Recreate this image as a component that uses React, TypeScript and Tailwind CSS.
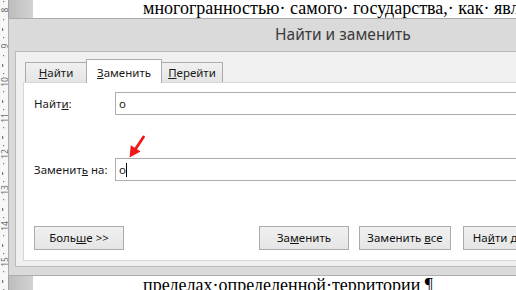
import React from "react";

function Ruler() {
  const nums = [8, 9, 10, 11, 12, 13, 14, 15];
  const base = 10;
  const step = 36;
  const marks: React.ReactNode[] = [];
  for (let i = -1; i < nums.length; i++) {
    const y = base + i * step;
    marks.push(<rect key={`a${i}`} x={3} y={y + 9} width={1.2} height={1.2} fill="#7a7a7a" />);
    marks.push(<rect key={`b${i}`} x={2} y={y + 18} width={1.2} height={3} fill="#7a7a7a" />);
    marks.push(<rect key={`c${i}`} x={3} y={y + 27} width={1.2} height={1.2} fill="#7a7a7a" />);
  }
  return (
    <svg width="8" height="290" viewBox="0 0 8 290" className="shrink-0 block bg-[#f7f7f7]">
      {nums.map((n, i) => {
        const y = base + i * step;
        return (
          <text
            key={n}
            x={4}
            y={y}
            fontSize="8.5"
            fill="#6b6b6b"
            fontFamily="'Noto Sans', sans-serif"
            textAnchor="middle"
            dominantBaseline="central"
            transform={`rotate(-90 4 ${y})`}
          >
            {n}
          </text>
        );
      })}
      {marks}
    </svg>
  );
}

function Arrow() {
  return (
    <svg className="absolute inset-0 pointer-events-none" width="516" height="290" viewBox="0 0 516 290">
      <line x1="143.5" y1="137" x2="135.5" y2="149" stroke="#f01818" strokeWidth="2.8" strokeLinecap="round" />
      <polygon points="129.5,157.5 130.8,145.2 140.6,151.6" fill="#f01818" />
    </svg>
  );
}

function Btn({ children, className }: { children: React.ReactNode; className?: string }) {
  return (
    <div
      className={`h-[24px] flex items-center justify-center border border-[#acacac] bg-linear-to-b from-[#f0f0f0] to-[#e5e5e5] text-[#111] ${className ?? ""}`}
    >
      {children}
    </div>
  );
}

function Dialog() {
  return (
    <div
      className="absolute left-[8px] top-[18px] w-[600px] h-[258px] bg-[#dadada] border border-[#adadad] flex flex-col text-[11.5px] text-[#1a1a1a]"
      style={{ fontFamily: '"Noto Sans", sans-serif' }}
    >
      <div className="h-[32px] shrink-0 flex items-center pl-[266px] text-[15.5px] text-[#3a3a3a]">
        Найти и заменить
      </div>
      <div className="flex-1 px-[6px] pb-[8px] flex flex-col">
        <div className="flex-1 bg-[#f0f0f0] border border-[#bababa] pl-[7px] pt-[7px] pb-[5px] flex flex-col">
          <div className="h-[23px] shrink-0 flex items-end pl-[2px]">
            <div className="w-[62px] h-[20px] border border-b-0 border-[#acacac] bg-linear-to-b from-[#f0f0f0] to-[#e5e5e5] flex items-center justify-center">
              <span><u>Н</u>айти</span>
            </div>
            <div className="relative z-10 -ml-px -mb-px w-[76px] h-[24px] border border-b-0 border-[#acacac] bg-white flex items-center justify-center pt-[2px]">
              <span><u>З</u>аменить</span>
            </div>
            <div className="-ml-px w-[62px] h-[20px] border border-b-0 border-[#acacac] bg-linear-to-b from-[#f0f0f0] to-[#e5e5e5] flex items-center justify-center">
              <span><u>П</u>ерейти</span>
            </div>
          </div>
          <div className="flex-1 bg-white border-t border-l border-b border-[#d6d6d6] pt-[9px] pb-[10px] flex flex-col">
            <div className="h-[23px] flex items-center">
              <div className="w-[91px] pl-[10px]">
                Найт<u>и</u>:
              </div>
              <div className="flex-1 h-[23px] border border-[#abadb3] pl-[3px] flex items-center">o</div>
            </div>
            <div className="h-[23px] mt-[43px] flex items-center">
              <div className="w-[91px] pl-[10px]">
                Заменит<u>ь</u> на:
              </div>
              <div className="flex-1 h-[23px] border border-[#abadb3] pl-[3px] flex items-center">
                <span>o</span>
                <span className="w-px h-[14px] bg-black" />
              </div>
            </div>
            <div className="h-[24px] mt-[45px] flex">
              <Btn className="ml-[10px] w-[90px]">
                <span>Боль<u>ш</u>е &gt;&gt;</span>
              </Btn>
              <Btn className="ml-[135px] w-[90px]">
                <span>За<u>м</u>енить</span>
              </Btn>
              <Btn className="ml-[10px] w-[92px]">
                <span>Заменить <u>в</u>се</span>
              </Btn>
              <Btn className="ml-[12px] w-[90px] border-[#569de5] from-[#ececec] to-[#e6e6e6]">
                <span>На<u>й</u>ти далее</span>
              </Btn>
            </div>
          </div>
        </div>
      </div>
    </div>
  );
}

export default function App() {
  return (
    <div className="relative w-[516px] h-[290px] overflow-hidden bg-white flex">
      <Ruler />
      <div className="w-[25px] h-full shrink-0 border-l border-[#a3a3a3] bg-linear-to-r from-[#bdbdbd] to-[#d2d2d2]" />
      <div
        className="flex-1 h-full flex flex-col justify-between pl-[110px] text-[18px] leading-[18px] whitespace-nowrap text-black"
        style={{ fontFamily: '"Liberation Serif", serif' }}
      >
        <div className="-mt-[1px]">многогранностью· самого· государства,· как· являет</div>
        <div className="-mb-[4px]">пределах·определенной·территории ¶</div>
      </div>
      <Dialog />
      <Arrow />
    </div>
  );
}
